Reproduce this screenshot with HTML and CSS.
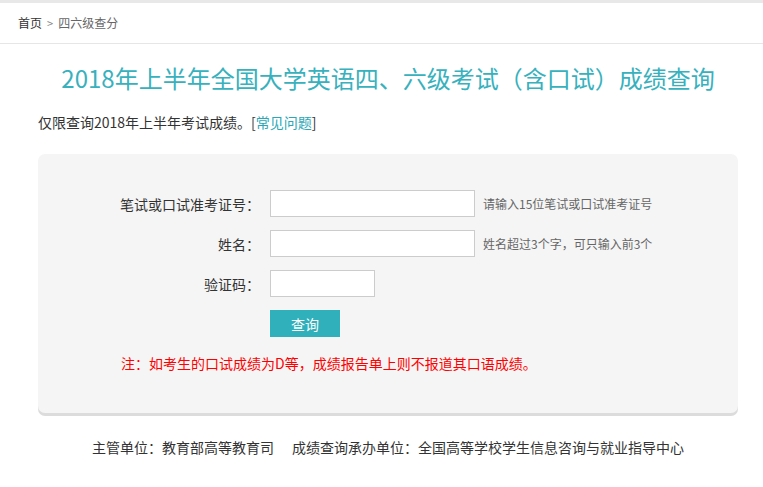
FILE: index.html
```html
<!DOCTYPE html>
<html lang="zh-CN">
<head>
<meta charset="utf-8">
<title>四六级查分</title>
<link rel="stylesheet" href="styles.css">
</head>
<body>
<div class="topband"></div>
<div class="breadcrumb">
  <a class="crumb-home" href="#">首页</a><span class="crumb-sep">&gt;</span><span class="crumb-cur">四六级查分</span>
</div>
<div class="container">
  <h1 class="title">2018年上半年全国大学英语四、六级考试（含口试）成绩查询</h1>
  <p class="intro">仅限查询2018年上半年考试成绩。[<a class="link" href="#">常见问题</a>]</p>
  <div class="panel">
    <div class="row">
      <label class="label">笔试或口试准考证号：</label>
      <input class="input" type="text">
      <span class="hint">请输入15位笔试或口试准考证号</span>
    </div>
    <div class="row">
      <label class="label">姓名：</label>
      <input class="input" type="text">
      <span class="hint">姓名超过3个字，可只输入前3个</span>
    </div>
    <div class="row">
      <label class="label">验证码：</label>
      <input class="input input-short" type="text">
    </div>
    <div class="row">
      <span class="label"></span>
      <button class="btn" type="button">查询</button>
    </div>
    <p class="note">注：如考生的口试成绩为D等，成绩报告单上则不报道其口语成绩。</p>
  </div>
  <div class="footer">
    <span>主管单位：教育部高等教育司</span><span class="footer-second">成绩查询承办单位：全国高等学校学生信息咨询与就业指导中心</span>
  </div>
</div>
</body>
</html>
```
FILE: styles.css
```css
* { box-sizing: border-box; }
body {
  margin: 0;
  background: #fff;
  font-family: "Noto Sans CJK SC", "Microsoft YaHei", sans-serif;
  color: #333;
  font-size: 14px;
}
a { text-decoration: none; }
.topband {
  height: 3px;
  background: #e8e8e8;
}
.breadcrumb {
  height: 41px;
  line-height: 40px;
  padding-left: 18px;
  font-size: 12px;
  border-bottom: 1px solid #e6e6e6;
}
.crumb-home { color: #333; }
.crumb-sep { color: #888; margin: 0 5px; font-size: 11px; }
.crumb-cur { color: #666; }
.container {
  width: 700px;
  margin-left: 38px;
}
.title {
  margin: 16px 0 0;
  font-size: 24px;
  line-height: 36px;
  font-weight: normal;
  color: #37b1bd;
  text-align: center;
  white-space: nowrap;
}
.intro {
  margin: 16px 0 0;
  line-height: 20px;
  font-size: 14px;
  color: #333;
}
.link { color: #2aa8b8; }
.panel {
  margin-top: 22px;
  background: #f5f5f5;
  border-radius: 7px;
  box-shadow: 0 3px 0 #dcdcdc;
  padding: 36px 0 40px;
}
.row {
  display: flex;
  align-items: center;
  height: 27px;
  margin-bottom: 13px;
}
.label {
  width: 222px;
  padding-right: 0;
  text-align: right;
  color: #333;
  font-size: 14px;
  flex: none;
}
.input {
  width: 205px;
  height: 27px;
  margin: 0 0 0 10px;
  border: 1px solid #cccccc;
  background: #fff;
  padding: 0 4px;
  outline: none;
  font-size: 14px;
}
.input-short { width: 105px; }
.hint {
  margin-left: 8px;
  font-size: 12px;
  color: #666;
}
.btn {
  margin-left: 10px;
  width: 70px;
  height: 27px;
  border: none;
  background: #2fb0bb;
  color: #fff;
  font-family: inherit;
  font-size: 14px;
  padding: 0;
}
.note {
  margin: 16px 0 0 83px;
  line-height: 20px;
  color: #ff0000;
  font-size: 14px;
}
.footer {
  margin-top: 24px;
  line-height: 20px;
  text-align: center;
  font-size: 14px;
  color: #333;
  white-space: nowrap;
}
.footer-second { margin-left: 18px; }
```
